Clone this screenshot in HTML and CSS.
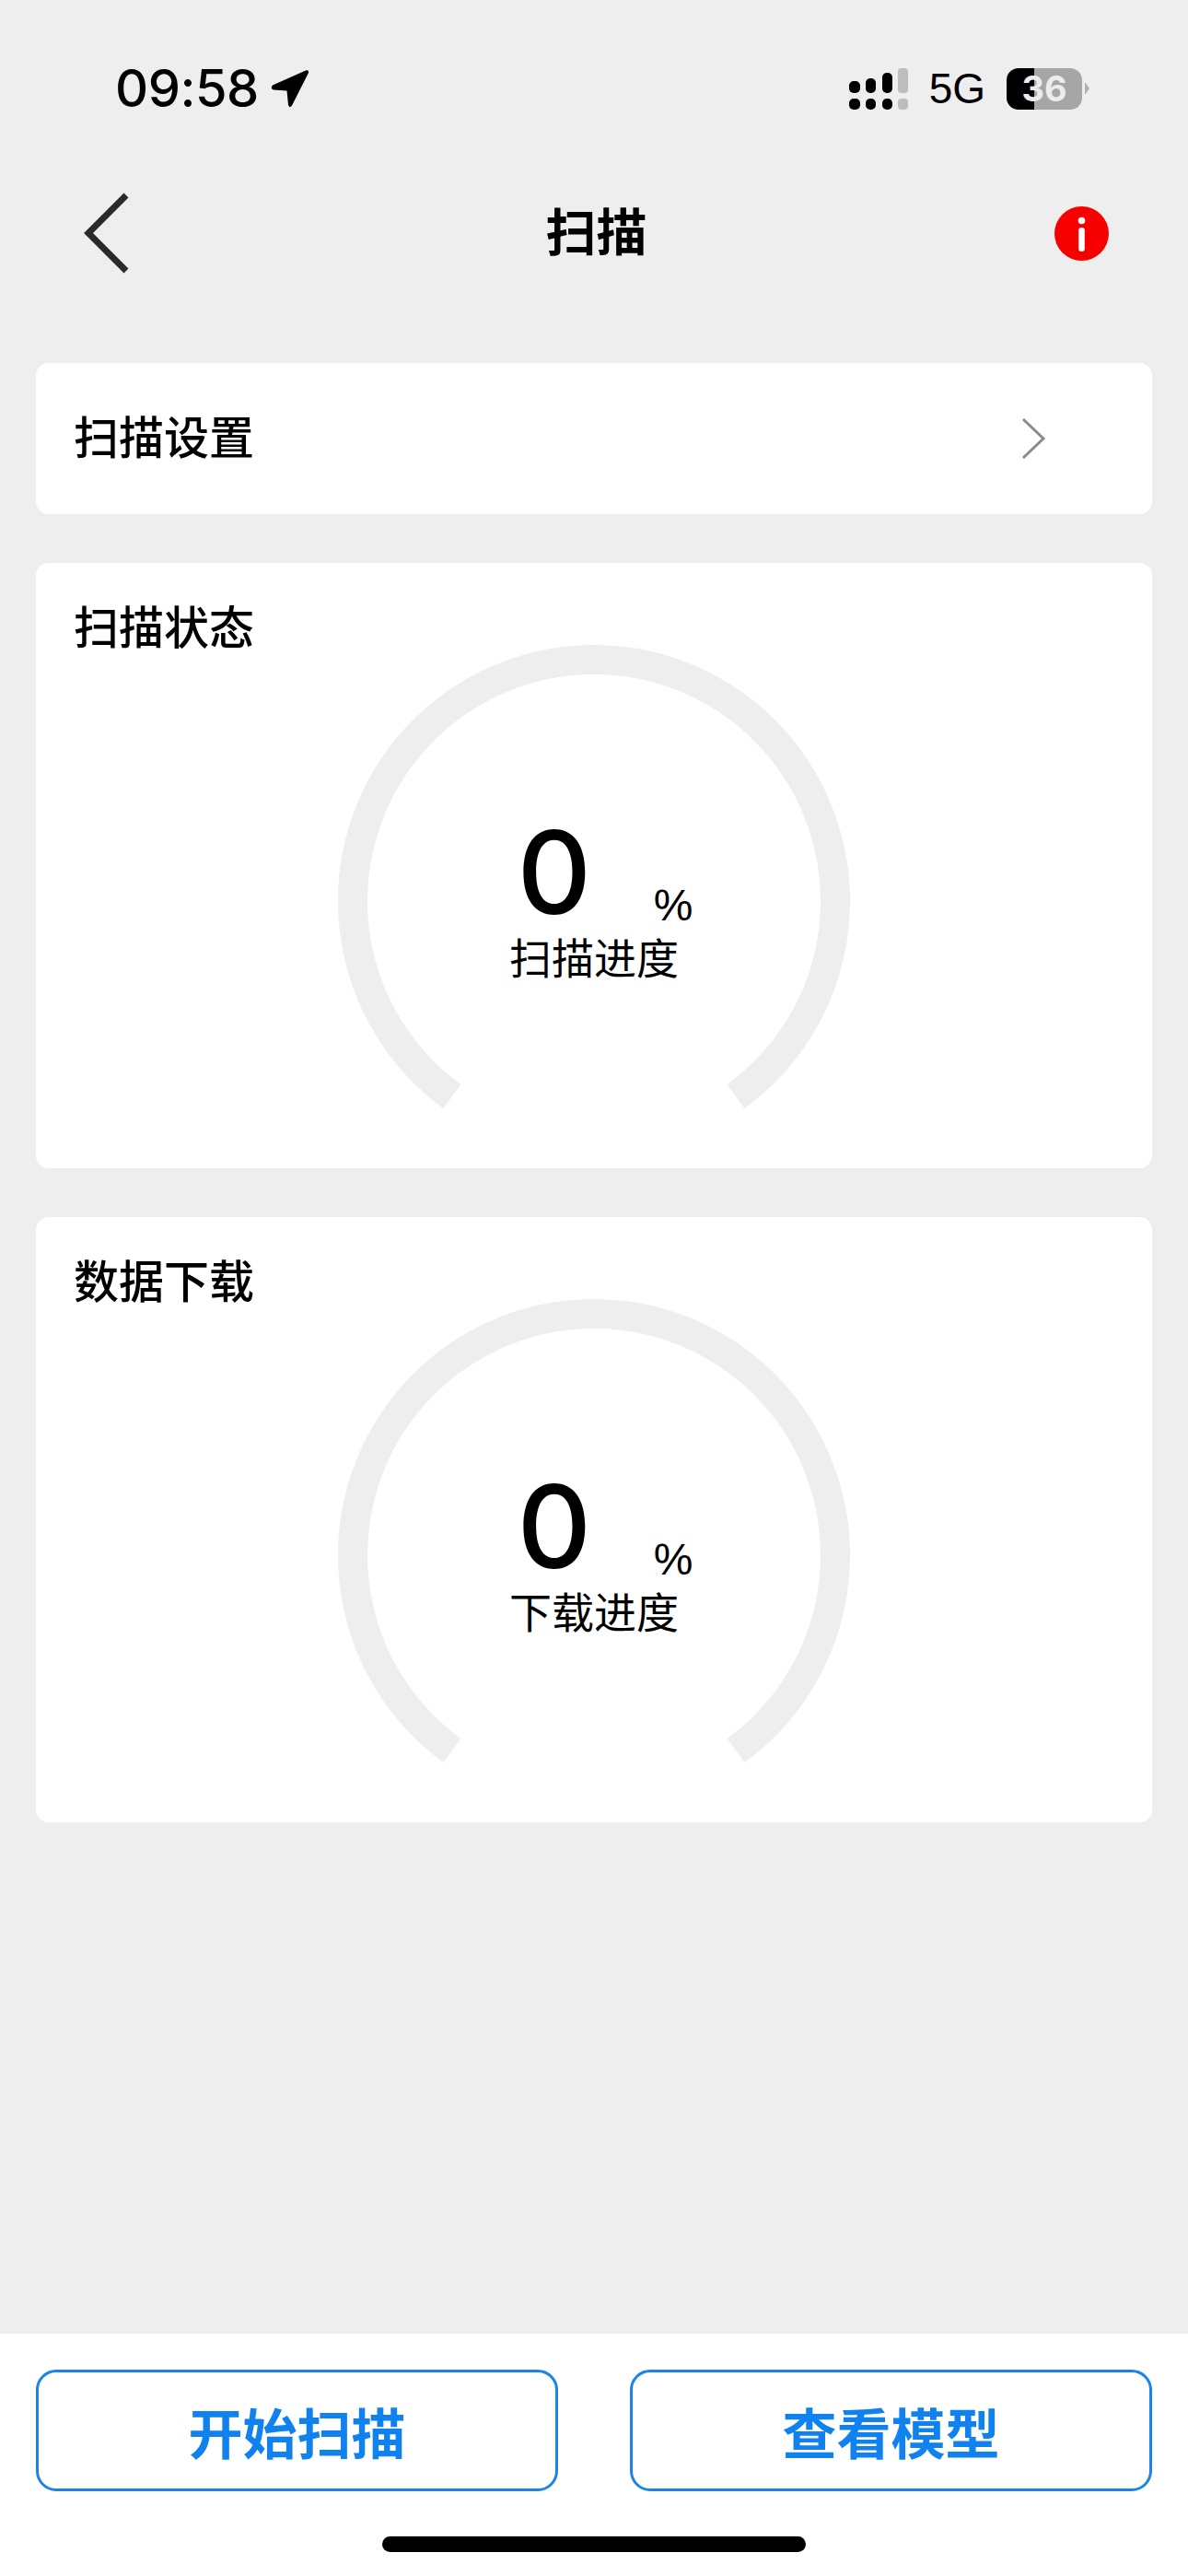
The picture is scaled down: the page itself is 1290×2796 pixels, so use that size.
FILE: index.html
```html
<!doctype html>
<html>
<head>
<meta charset="UTF-8">
<title>扫描</title>
<link rel="stylesheet" href="styles.css">
</head>
<body>
<div class="wrap">
	<div class="status-bar">
		<span class="time">09:58</span>
		<svg class="loc-ico" width="42" height="42" viewBox="0 0 42 42"><path d="M38 1.500 Q41.500 0.500 41 4 L23 39.500 Q20.500 43 19 39 L17.500 23.500 L3 22.500 Q-1 21 2 17.500 Z" fill="#000"/></svg>
		<div class="status-right">
			<svg class="signal" width="64" height="45" viewBox="0 0 64 45">
				<rect x="0" y="14" width="12" height="13" rx="5"/>
				<rect x="18" y="11" width="11" height="16" rx="5"/>
				<rect x="36" y="5" width="11" height="22" rx="5"/>
				<rect x="0" y="33" width="12" height="12" rx="5"/>
				<rect x="18" y="33" width="11" height="12" rx="5"/>
				<rect x="36" y="33" width="11" height="12" rx="5"/>
				<rect class="off" x="53" y="0" width="11" height="27" rx="4"/>
				<rect class="off" x="53" y="33" width="11" height="12" rx="4"/>
			</svg>
			<span class="net">5G</span>
			<div class="battery"><span>36</span></div>
			<span class="battery-cap"></span>
		</div>
	</div>
	<div class="nav">
		<svg class="back" width="50" height="88" viewBox="0 0 50 88"><path d="M46 3 L5 44 L46 85" transform="translate(0 0)" fill="none" stroke="#2a2a2a" stroke-width="7"/></svg>
		<h1 class="nav-title">扫描</h1>
		<svg class="info" width="59" height="59" viewBox="0 0 59 59">
			<circle cx="29.500" cy="29.500" r="29.500" fill="#f60000"/>
			<circle cx="29.500" cy="15.500" r="3.800" fill="#fff"/>
			<rect x="26.200" y="23" width="6.600" height="26" rx="3" fill="#fff"/>
		</svg>
	</div>
	<div class="main">
		<div class="card card-row">
			<span class="card-title">扫描设置</span>
			<svg class="more" width="28" height="46" viewBox="0 0 28 46"><path d="M3 2 L25 23 L3 44" fill="none" stroke="#8c8c8c" stroke-width="3"/></svg>
		</div>
		<div class="card">
			<div class="card-title">扫描状态</div>
			<div class="gauge">
				<svg width="558" height="530" viewBox="0 0 558 530"><path d="M125 490 A262 262 0 1 1 433 490" fill="none" stroke="#eeeeee" stroke-width="32"/></svg>
				<div class="gauge-text">
					<div class="gauge-num"><span class="num">0</span><span class="pct">%</span></div>
					<div class="gauge-label">扫描进度</div>
				</div>
			</div>
		</div>
		<div class="card">
			<div class="card-title">数据下载</div>
			<div class="gauge">
				<svg width="558" height="530" viewBox="0 0 558 530"><path d="M125 490 A262 262 0 1 1 433 490" fill="none" stroke="#eeeeee" stroke-width="32"/></svg>
				<div class="gauge-text">
					<div class="gauge-num"><span class="num">0</span><span class="pct">%</span></div>
					<div class="gauge-label">下载进度</div>
				</div>
			</div>
		</div>
	</div>
	<div class="footer">
		<div class="btn-row">
			<div class="btn">开始扫描</div>
			<div class="btn">查看模型</div>
		</div>
		<div class="home-bar"></div>
	</div>
</div>
</body>
</html>
```

FILE: styles.css
```css
*{margin:0;padding:0;box-sizing:border-box;}
html,body{height:100%;}
body{background:#eeeeee;color:#000;font-family:"Liberation Sans","Noto Sans CJK SC",sans-serif;overflow:hidden;}
.wrap{height:2796px;display:flex;flex-direction:column;}

/* status bar */
.status-bar{height:192px;padding:0 107px 0 125px;display:flex;align-items:center;flex:none;}
.time{font-family:Inter,"Liberation Sans",sans-serif;font-size:56px;font-weight:500;letter-spacing:-0.5px;line-height:1;}
.loc-ico{margin-left:13px;}
.status-right{margin-left:auto;display:flex;align-items:center;}
.signal{fill:#000;}
.signal .off{fill:#bdbdbd;}
.net{font-size:46px;line-height:1;margin-left:23px;}
.battery{width:82px;height:45px;margin-left:23px;border-radius:13px;background:linear-gradient(90deg,#000 30px,#a6a6a6 30px);display:flex;align-items:center;justify-content:center;}
.battery span{font-family:Inter,"Liberation Sans",sans-serif;font-size:38px;font-weight:700;color:#ececec;line-height:1;}
.battery-cap{width:0;height:0;margin-left:3px;border-left:5px solid #b0b0b0;border-top:7px solid transparent;border-bottom:7px solid transparent;}

/* nav */
.nav{height:122px;padding:0 86px 0 91px;display:grid;grid-template-columns:1fr auto 1fr;align-items:center;flex:none;}
.nav-title{font-size:55px;font-weight:700;line-height:1;}
.info{justify-self:end;}

/* cards */
.main{flex:1;padding:80px 39px 0;display:flex;flex-direction:column;gap:53px;}
.card{background:#fff;border-radius:14px;}
.card-title{font-size:49px;font-weight:500;line-height:36px;padding:53px 0 0 41px;}
.card-row{height:164px;padding:0 115px 0 41px;display:flex;align-items:center;justify-content:space-between;}
.card-row .card-title{padding:0;}

/* gauge */
.gauge{position:relative;width:558px;height:568px;margin-left:327px;}
.gauge svg{display:block;}
.gauge-text{position:absolute;left:0;right:0;top:185px;display:flex;flex-direction:column;align-items:center;}
.gauge-num{display:flex;align-items:baseline;width:191px;margin-left:24px;height:124px;}
.num{font-family:Inter,"Liberation Sans",sans-serif;font-size:125px;font-weight:500;line-height:124px;}
.pct{font-size:48px;margin-left:auto;position:relative;top:7px;}
.gauge-label{font-size:46px;line-height:60px;margin-top:2px;}

/* bottom buttons */
.footer{height:263px;background:#fff;flex:none;padding:39px 39px 0;}
.btn-row{display:flex;justify-content:space-between;}
.btn{width:567px;height:132px;border:3px solid #1a84e8;border-radius:22px;color:#0f82f0;font-size:59px;font-weight:700;display:flex;align-items:center;justify-content:center;}
.home-bar{width:460px;height:17px;margin:49px auto 0;background:#000;border-radius:9px;}
```
